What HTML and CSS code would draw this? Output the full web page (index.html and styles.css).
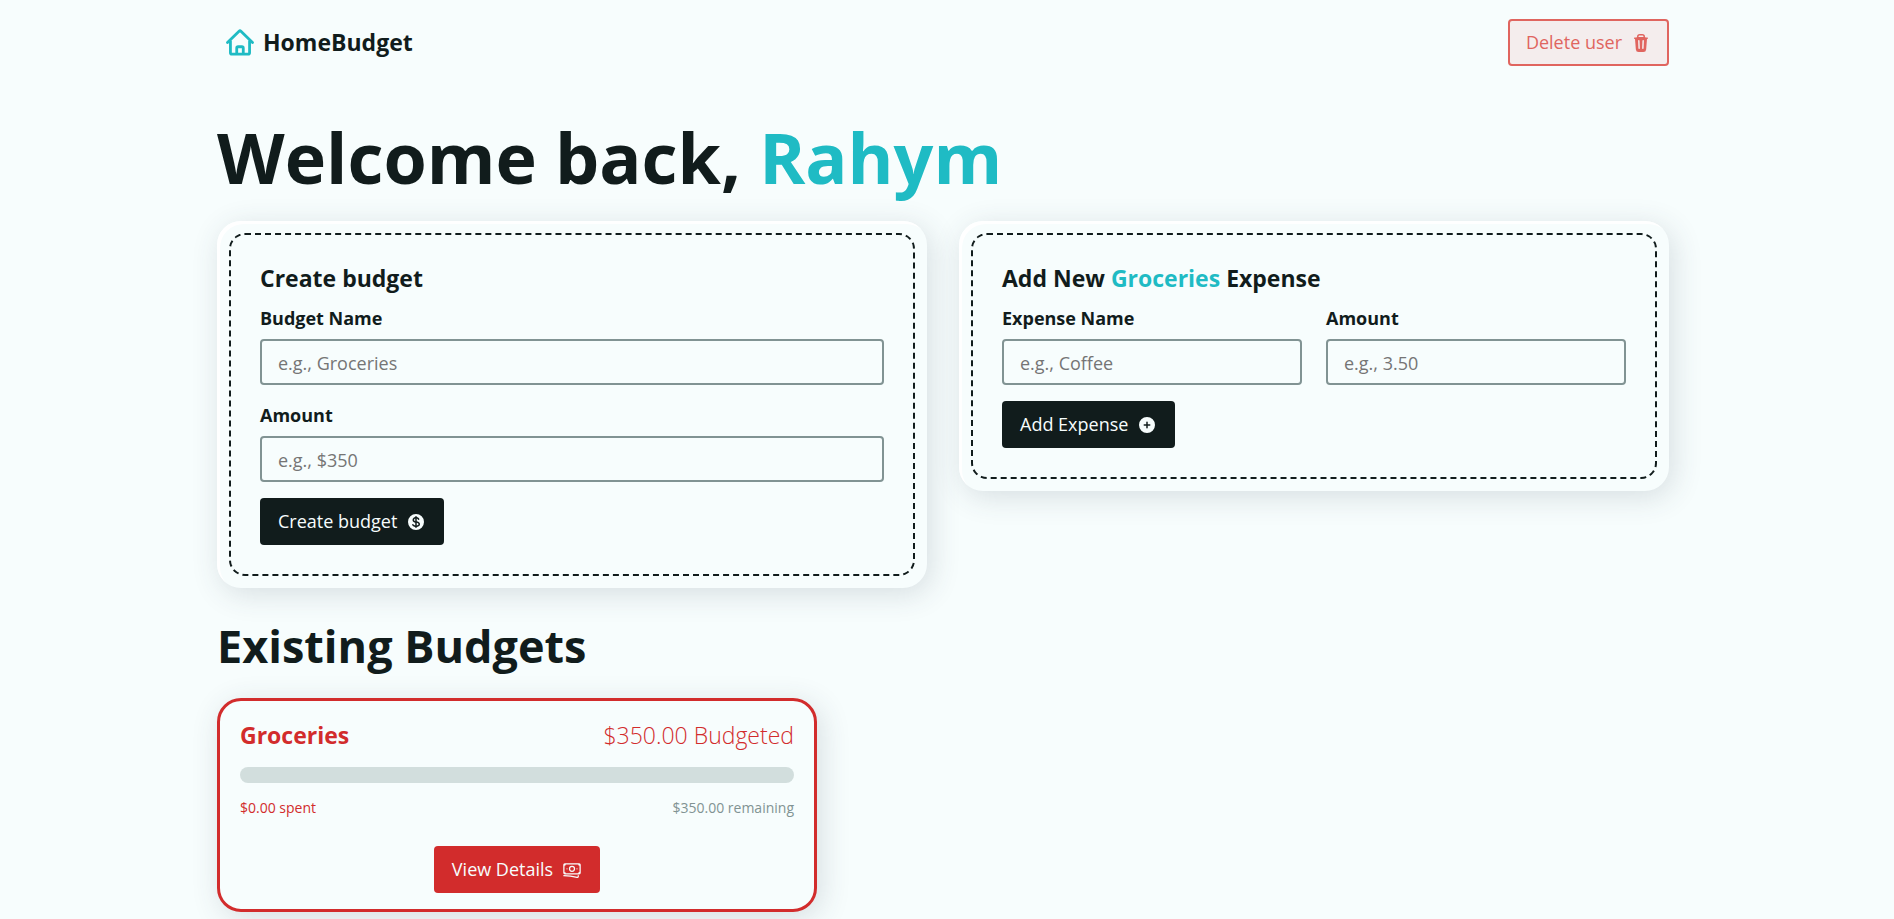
FILE: index.html
```html
<!DOCTYPE html>
<html lang="en">
<head>
<meta charset="utf-8">
<title>HomeBudget</title>
<link rel="stylesheet" href="styles.css">
</head>
<body>
<div class="layout">
  <nav class="nav">
    <a class="brand" href="#" aria-label="Go to home">
      <svg class="brand-icon" viewBox="0 0 24 24" fill="none" stroke="currentColor" stroke-width="2.400" stroke-linecap="round" stroke-linejoin="round" aria-hidden="true"><path d="M1.300 11.600 11.200 1.900a1.150 1.150 0 0 1 1.600 0L22.700 11.600M3.800 10v10.300c0 .700.500 1.200 1.200 1.200h14c.700 0 1.200-.500 1.200-1.200V10M9.200 21.300v-4.900c0-.700.500-1.200 1.200-1.200h3.200c.700 0 1.200.500 1.200 1.200v4.900"/></svg>
      <span>HomeBudget</span>
    </a>
    <button class="btn btn-warning" type="button">
      <span>Delete user</span>
      <svg class="icon" viewBox="0 0 20 20" fill="currentColor" aria-hidden="true"><path fill-rule="evenodd" clip-rule="evenodd" d="M8.750 1A2.750 2.750 0 0 0 6 3.750v.443c-.795.077-1.584.176-2.365.298a.75.75 0 1 0 .23 1.482l.149-.022.841 10.518A2.750 2.750 0 0 0 7.596 19h4.807a2.750 2.750 0 0 0 2.742-2.530l.841-10.520.149.023a.75.75 0 0 0 .23-1.482A41.030 41.030 0 0 0 14 4.193V3.750A2.750 2.750 0 0 0 11.250 1h-2.500ZM10 4c.840 0 1.673.025 2.500.075V3.750c0-.690-.560-1.250-1.250-1.250h-2.500c-.690 0-1.250.560-1.250 1.250v.325C8.327 4.025 9.160 4 10 4ZM8.580 7.720a.75.75 0 0 0-1.500.060l.300 7.500a.75.75 0 1 0 1.500-.060l-.300-7.500Zm4.340.060a.75.75 0 1 0-1.500-.060l-.300 7.500a.75.75 0 1 0 1.500.060l.300-7.500Z"/></svg>
    </button>
  </nav>
  <main class="dashboard">
    <h1>Welcome back, <span class="accent">Rahym</span></h1>
    <div class="forms">
      <section class="form-card">
        <div class="form-inner">
          <h2 class="h3">Create budget</h2>
          <form class="form">
            <div class="field">
              <label for="newBudget">Budget Name</label>
              <input type="text" id="newBudget" placeholder="e.g., Groceries">
            </div>
            <div class="field">
              <label for="newBudgetAmount">Amount</label>
              <input type="text" inputmode="decimal" id="newBudgetAmount" placeholder="e.g., $350">
            </div>
            <button class="btn btn-dark" type="submit">
              <span>Create budget</span>
              <svg class="icon" viewBox="0 0 20 20" fill="currentColor" aria-hidden="true"><path d="M10.750 10.818v2.614A3.130 3.130 0 0 0 11.888 13c.482-.315.612-.648.612-.875 0-.227-.130-.560-.612-.875a3.130 3.130 0 0 0-1.138-.432ZM8.330 8.620c.053.055.115.110.184.164.208.160.460.284.736.363V6.603a2.450 2.450 0 0 0-.350.130c-.140.065-.270.143-.386.233-.377.292-.514.627-.514.909 0 .184.058.390.202.592.037.051.080.102.128.152Z"/><path fill-rule="evenodd" clip-rule="evenodd" d="M18 10a8 8 0 1 1-16 0 8 8 0 0 1 16 0Zm-8-6a.75.75 0 0 1 .75.75v.316a3.780 3.780 0 0 1 1.653.713c.426.330.744.740.925 1.200a.75.75 0 0 1-1.395.550 1.350 1.350 0 0 0-.447-.563 2.187 2.187 0 0 0-.736-.363V9.300c.698.093 1.383.320 1.959.696.787.514 1.290 1.270 1.290 2.130 0 .860-.504 1.616-1.290 2.130-.576.377-1.261.603-1.960.696v.299a.75.75 0 1 1-1.500 0v-.300c-.697-.092-1.382-.318-1.958-.695-.482-.315-.857-.717-1.078-1.188a.75.75 0 1 1 1.359-.636c.080.173.245.376.540.569.313.205.706.353 1.138.432v-2.748a3.782 3.782 0 0 1-1.653-.713C6.900 9.433 6.500 8.681 6.500 7.875c0-.805.400-1.558 1.097-2.096a3.780 3.780 0 0 1 1.653-.713V4.750A.75.75 0 0 1 10 4Z"/></svg>
            </button>
          </form>
        </div>
      </section>
      <section class="form-card">
        <div class="form-inner">
          <h2 class="h3">Add New <span class="accent">Groceries</span> Expense</h2>
          <form class="form">
            <div class="field-row">
              <div class="field">
                <label for="newExpense">Expense Name</label>
                <input type="text" id="newExpense" placeholder="e.g., Coffee">
              </div>
              <div class="field">
                <label for="newExpenseAmount">Amount</label>
                <input type="text" inputmode="decimal" id="newExpenseAmount" placeholder="e.g., 3.50">
              </div>
            </div>
            <button class="btn btn-dark" type="submit">
              <span>Add Expense</span>
              <svg class="icon" viewBox="0 0 20 20" fill="currentColor" aria-hidden="true"><path fill-rule="evenodd" clip-rule="evenodd" d="M10 18a8 8 0 1 0 0-16 8 8 0 0 0 0 16Zm.75-10.750a.75.75 0 0 0-1.500 0v2h-2a.75.75 0 0 0 0 1.500h2v2a.75.75 0 0 0 1.500 0v-2h2a.75.75 0 0 0 0-1.500h-2v-2Z"/></svg>
            </button>
          </form>
        </div>
      </section>
    </div>
    <h2 class="section-title">Existing Budgets</h2>
    <div class="budgets">
      <article class="budget">
        <div class="budget-head">
          <h3 class="h3">Groceries</h3>
          <p class="budget-total">$350.00 Budgeted</p>
        </div>
        <div class="bar" role="progressbar" aria-label="Groceries spent" aria-valuemin="0" aria-valuemax="350" aria-valuenow="0"></div>
        <div class="budget-foot">
          <small>$0.00 spent</small>
          <small class="muted">$350.00 remaining</small>
        </div>
        <a class="btn btn-red" href="#">
          <span>View Details</span>
          <svg class="icon" viewBox="0 0 24 24" fill="none" stroke="currentColor" stroke-width="1.500" stroke-linecap="round" stroke-linejoin="round" aria-hidden="true"><path d="M2.250 18.750a60.070 60.070 0 0 1 15.797 2.101c.727.198 1.453-.342 1.453-1.096V18.750M3.750 4.500v.75A.75.75 0 0 1 3 6h-.75m0 0v-.375c0-.621.504-1.125 1.125-1.125H20.250M2.250 6v9m18-10.500v.75c0 .414.336.75.75.75h.75m-1.500-1.500h.375c.621 0 1.125.504 1.125 1.125v9.750c0 .621-.504 1.125-1.125 1.125h-.375m1.500-1.500H21a.75.75 0 0 0-.75.75v.75m0 0H3.750m0 0h-.375a1.125 1.125 0 0 1-1.125-1.125V15m1.500 1.500v-.75A.75.75 0 0 0 3 15h-.75M15 10.500a3 3 0 1 1-6 0 3 3 0 0 1 6 0Zm3 0h.008v.008H18V10.500Zm-12 0h.008v.008H6V10.500Z"/></svg>
        </a>
      </article>
    </div>
  </main>
</div>
</body>
</html>
```
FILE: styles.css
```css
*, *::before, *::after {
  box-sizing: border-box;
}

:root {
  --accent: #1fbbc4;
  --bkg: #f7fdfd;
  --text: #111c1c;
  --muted: #819393;
  --light: #d2dedd;
  --red: #d22c2c;
  --shadow: 4px 6px 30px rgba(50, 60, 80, 0.16);
}

body {
  margin: 0;
  padding-right: 8px;
  background: var(--bkg);
  color: var(--text);
  font-family: "Segoe UI", "Open Sans", "Noto Sans", sans-serif;
  font-size: 18px;
  line-height: 27px;
}

h1, h2, h3, p {
  margin: 0;
}

h1, h2, h3 {
  font-weight: 700;
}

.layout {
  width: 77%;
  max-width: 1452px;
  margin-left: auto;
  margin-right: auto;
  padding-bottom: 64px;
}

.nav {
  display: flex;
  justify-content: space-between;
  align-items: center;
  padding: 19px 0 19px 9px;
}

.brand {
  display: flex;
  align-items: center;
  gap: 9px;
  color: inherit;
  font-size: 23px;
  font-weight: 700;
  text-decoration: none;
}

.brand-icon {
  width: 28px;
  height: 28px;
  color: var(--accent);
}

.accent {
  color: var(--accent);
}

.btn {
  display: inline-flex;
  align-items: center;
  gap: 9px;
  padding: 8px 16px;
  border: 2px solid transparent;
  border-radius: 4px;
  font: inherit;
  text-decoration: none;
  cursor: pointer;
}

.icon {
  width: 20px;
  height: 20px;
}

.btn-warning {
  color: #e0655f;
  background: #f4eded;
  border-color: #e0655f;
}

.btn-dark {
  align-self: flex-start;
  color: var(--bkg);
  background: var(--text);
}

.btn-red {
  align-self: center;
  color: var(--bkg);
  background: var(--red);
}

h1 {
  margin-top: 28px;
  font-size: 70px;
  line-height: 88px;
}

.h3 {
  font-size: 23px;
  line-height: 28px;
}

.forms {
  display: grid;
  grid-template-columns: 1fr 1fr;
  align-items: start;
  gap: 32px;
  margin-top: 20px;
}

.form-card {
  padding: 12px;
  border-radius: 24px;
  background: var(--bkg);
  box-shadow: var(--shadow), inset 3px 3px 0 #fff;
}

.form-inner {
  padding: 29px;
  border: 2px dashed var(--text);
  border-radius: 16px;
}

.form {
  display: flex;
  flex-direction: column;
  gap: 16px;
  margin-top: 12px;
}

.field-row {
  display: grid;
  grid-template-columns: 1fr 1fr;
  gap: 24px;
}

.field {
  display: flex;
  flex-direction: column;
  gap: 6px;
}

.field label {
  font-weight: 700;
  line-height: 29px;
}

.field input {
  width: 100%;
  height: 46px;
  padding: 2px 16px 0;
  border: 2px solid var(--muted);
  border-radius: 4px;
  background: transparent;
  color: inherit;
  font: inherit;
}

.field input::placeholder {
  color: #757575;
}

.section-title {
  margin-top: 28px;
  font-size: 45px;
  line-height: 60px;
}

.budgets {
  display: flex;
  flex-wrap: wrap;
  gap: 32px;
  margin-top: 22px;
}

.budget {
  display: flex;
  flex-direction: column;
  flex: 0 1 600px;
  padding: 16px 20px;
  border: 3px solid var(--red);
  border-radius: 24px;
  background: var(--bkg);
  box-shadow: var(--shadow);
  color: var(--red);
}

.budget-head, .budget-foot {
  display: flex;
  justify-content: space-between;
  align-items: center;
}

.budget-total {
  font-size: 23px;
  font-weight: 300;
  line-height: 36px;
}

.bar {
  height: 16px;
  margin: 14px 0;
  border-radius: 8px;
  background: var(--light);
}

.budget-foot {
  margin-bottom: 28px;
  font-size: 14px;
  line-height: 21px;
}

.budget-foot small {
  font-size: inherit;
}

.muted {
  color: var(--muted);
}
```
